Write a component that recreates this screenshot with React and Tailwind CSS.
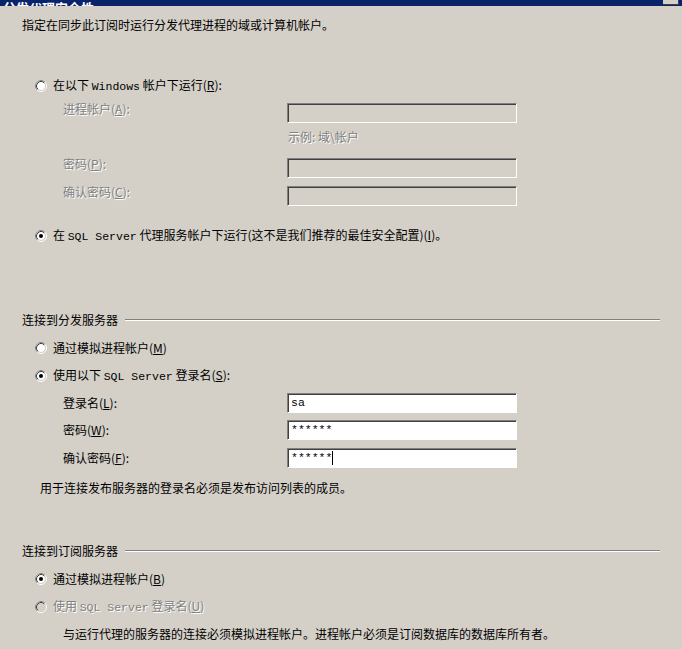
import React from "react";

const Radio = ({ checked, disabled }) => (
  <svg width="12" height="12" viewBox="0 0 12 12" className="shrink-0">
    <circle cx="6" cy="6" r="5.5" stroke="#ffffff" fill="none" />
    <path d="M9.9 2.1 A5.5 5.5 0 0 0 2.1 9.9" stroke="#808080" fill="none" />
    <circle cx="6" cy="6" r="4.5" stroke="#d4d0c8" fill={disabled ? "#d4d0c8" : "#ffffff"} />
    <path d="M9.18 2.82 A4.5 4.5 0 0 0 2.82 9.18" stroke="#404040" fill="none" />
    {checked && <circle cx="6" cy="6" r="2" fill="#000000" />}
  </svg>
);

const Mono = ({ children }) => (
  <span className="font-['Liberation_Mono',monospace] text-[11.5px]">{children}</span>
);

const Key = ({ k }) => (
  <span>
    (<span className="underline">{k}</span>)
  </span>
);

const dis = "text-[#808080] [text-shadow:1px_1px_0_#ffffff]";

const RadioRow = ({ checked, disabled, className, children }) => (
  <div className={`flex h-[20px] items-center pl-[35px] ${className}`}>
    <Radio checked={checked} disabled={disabled} />
    <span className={`ml-[6px] ${disabled ? dis : ""}`}>{children}</span>
  </div>
);

const Field = ({ label, value, caret, disabled, className }) => (
  <div className={`flex h-[20px] pl-[63px] ${className}`}>
    <div className={`w-[224px] ${disabled ? "-mt-[4px] " + dis : ""} flex items-center h-[20px]`}>
      {label}
    </div>
    <div
      className={`w-[230px] h-[20px] border-t border-l border-t-[#808080] border-l-[#808080] border-b border-r border-b-white border-r-white shadow-[inset_1px_1px_0_#404040] flex items-center pl-[3px] ${
        disabled ? "bg-[#d4d0c8]" : "bg-white"
      }`}
    >
      {value && <Mono>{value}</Mono>}
      {caret && <span className="w-px h-[14px] bg-black" />}
    </div>
  </div>
);

const Section = ({ title, className }) => (
  <div className={`flex h-[20px] items-center pl-[22px] pr-[22px] ${className}`}>
    <span>{title}</span>
    <div className="flex-1 ml-[7px] border-t border-t-[#808080] border-b border-b-white" />
  </div>
);

export default function App() {
  return (
    <div className="w-[682px] h-[649px] overflow-hidden bg-[#d4d0c8] text-black text-[12px] leading-[14px] font-['Noto_Sans_CJK_SC','Liberation_Sans',sans-serif]">
      {/* title bar, cut off at the top */}
      <div className="h-[6px] bg-[#0a246a] flex items-end justify-between overflow-hidden">
        <span className="text-white font-bold text-[13px] leading-[14px] pl-[3px] mb-[-9px]">分发代理安全性</span>
        <div className="w-[16px] h-[5px] mr-[3px] bg-[#d4d0c8] border-b border-r border-b-[#404040] border-r-[#404040] self-start" />
      </div>

      <div className="flex h-[20px] items-center pl-[22px] mt-[9px]">
        指定在同步此订阅时运行分发代理进程的域或计算机帐户。
      </div>

      <RadioRow className="mt-[41px]">
        在以下 <Mono>Windows</Mono> 帐户下运行<Key k="R" />:
      </RadioRow>
      <Field className="mt-[7px]" disabled label={<>进程帐户<Key k="A" />:</>} />
      <div className={`flex h-[20px] items-center pl-[288px] mt-[4px] ${dis}`}>示例: 域\帐户</div>
      <Field className="mt-[11px]" disabled label={<>密码<Key k="P" />:</>} />
      <Field className="mt-[8px]" disabled label={<>确认密码<Key k="C" />:</>} />
      <RadioRow checked className="mt-[20px]">
        在 <Mono>SQL Server</Mono> 代理服务帐户下运行(这不是我们推荐的最佳安全配置)<Key k="I" />。
      </RadioRow>

      <Section title="连接到分发服务器" className="mt-[64px]" />
      <RadioRow className="mt-[8px]">
        通过模拟进程帐户<Key k="M" />
      </RadioRow>
      <RadioRow checked className="mt-[8px]">
        使用以下 <Mono>SQL Server</Mono> 登录名<Key k="S" />:
      </RadioRow>
      <Field className="mt-[7px]" label={<>登录名<Key k="L" />:</>} value="sa" />
      <Field className="mt-[7px]" label={<>密码<Key k="W" />:</>} value="******" />
      <Field className="mt-[8px]" label={<>确认密码<Key k="F" />:</>} value="******" caret />
      <div className="flex h-[20px] items-center pl-[40px] mt-[10px]">
        用于连接发布服务器的登录名必须是发布访问列表的成员。
      </div>

      <Section title="连接到订阅服务器" className="mt-[43px]" />
      <RadioRow checked className="mt-[8px]">
        通过模拟进程帐户<Key k="B" />
      </RadioRow>
      <RadioRow disabled className="mt-[8px]">
        使用 <Mono>SQL Server</Mono> 登录名<Key k="U" />
      </RadioRow>
      <div className="flex h-[20px] items-center pl-[63px] mt-[7px]">
        与运行代理的服务器的连接必须模拟进程帐户。进程帐户必须是订阅数据库的数据库所有者。
      </div>
    </div>
  );
}
